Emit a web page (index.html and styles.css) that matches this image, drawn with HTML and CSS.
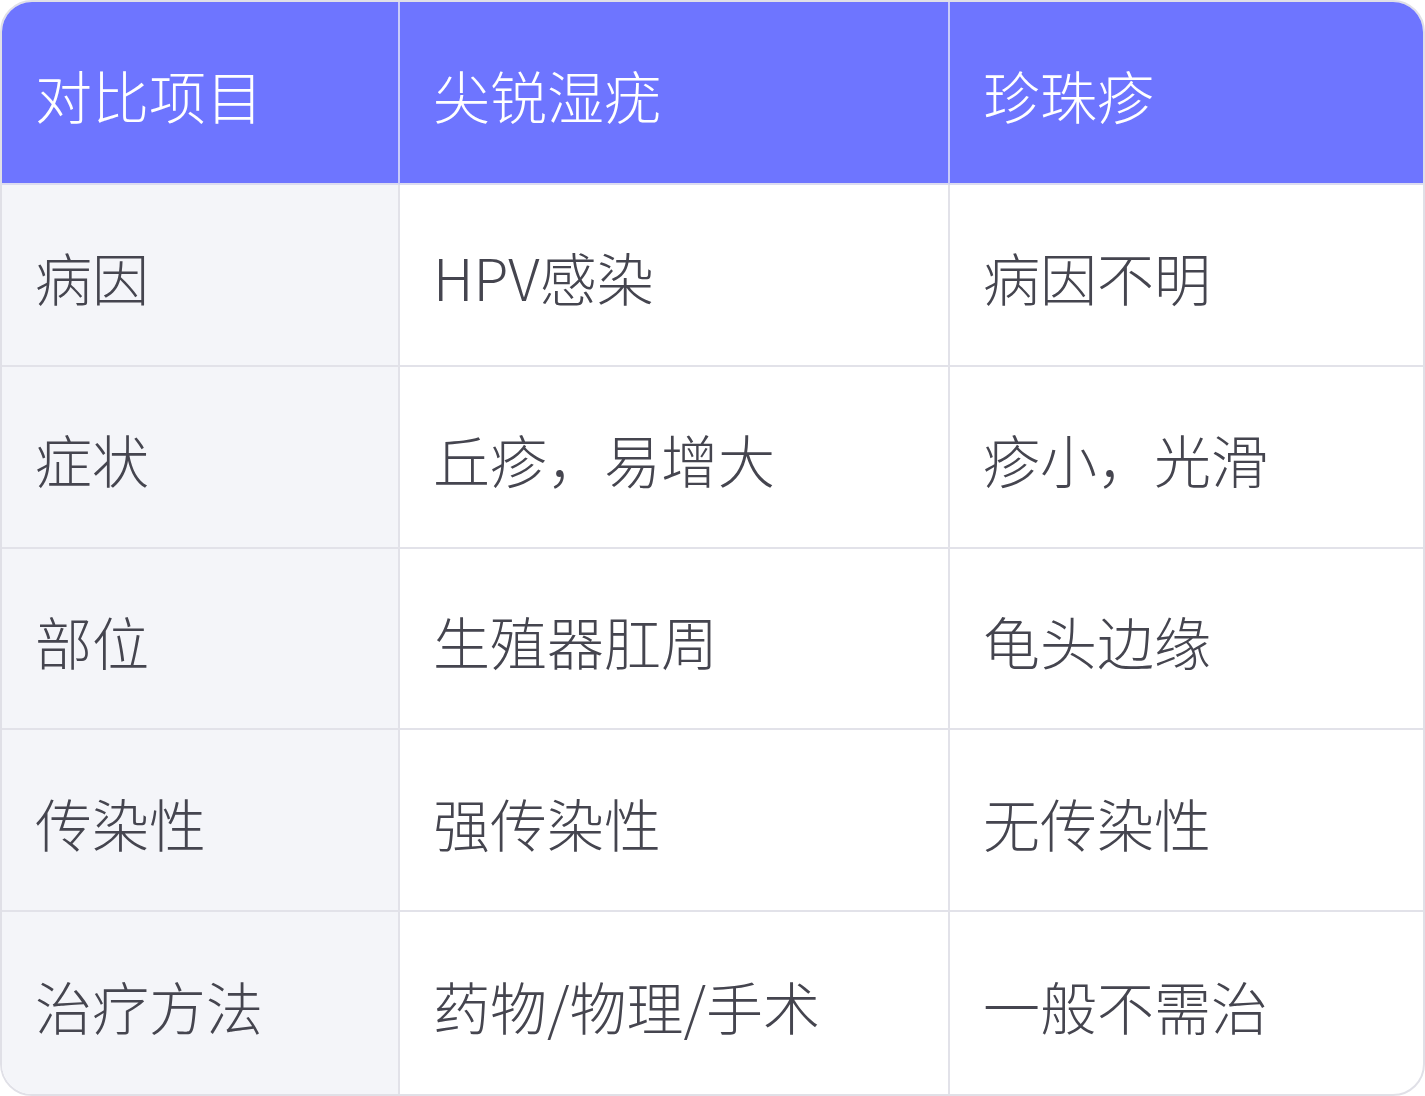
FILE: index.html
```html
<!DOCTYPE html>
<html lang="zh-CN">
<head>
<meta charset="utf-8">
<link rel="stylesheet" href="styles.css">
</head>
<body>
<div class="table">
  <div class="cell head">对比项目</div>
  <div class="cell head">尖锐湿疣</div>
  <div class="cell head last">珍珠疹</div>

  <div class="cell first">病因</div>
  <div class="cell">HPV感染</div>
  <div class="cell last">病因不明</div>

  <div class="cell first">症状</div>
  <div class="cell">丘疹，易增大</div>
  <div class="cell last">疹小，光滑</div>

  <div class="cell first">部位</div>
  <div class="cell">生殖器肛周</div>
  <div class="cell last">龟头边缘</div>

  <div class="cell first">传染性</div>
  <div class="cell">强传染性</div>
  <div class="cell last">无传染性</div>

  <div class="cell first bottom">治疗方法</div>
  <div class="cell bottom">药物/物理/手术</div>
  <div class="cell last bottom">一般不需治</div>
</div>
</body>
</html>
```
FILE: styles.css
```css
html, body {
  margin: 0;
  padding: 0;
  background: #ffffff;
}
.table {
  width: 1425px;
  height: 1096px;
  box-sizing: border-box;
  border: 2px solid #e0e0e7;
  border-radius: 32px;
  overflow: hidden;
  display: grid;
  grid-template-columns: 398px 550px 1fr;
  grid-template-rows: 183px repeat(5, 1fr);
  font-family: "Noto Sans CJK SC", "Noto Sans", sans-serif;
  font-weight: 300;
  font-size: 57px;
  color: #45454f;
  background: #ffffff;
}
.cell {
  display: flex;
  align-items: center;
  padding-left: 33px;
  padding-top: 3px;
  border-right: 2px solid #e2e2e9;
  border-bottom: 2px solid #e2e2e9;
  box-sizing: border-box;
  white-space: nowrap;
}
.cell.last { border-right: none; }
.cell.bottom { border-bottom: none; }
.cell.first { background: #f4f5f9; }
.cell.head {
  background: #6e75ff;
  color: #ffffff;
  border-right-color: #c9cbfa;
  border-bottom-color: #dcdcf0;
}
.cell.head.last { border-right: none; }
```
